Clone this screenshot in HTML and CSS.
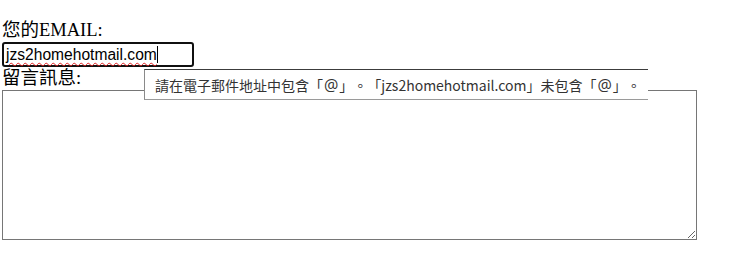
FILE: index.html
```html
<!DOCTYPE html>
<html lang="zh-Hant">
<head>
<meta charset="utf-8">
<link rel="stylesheet" href="styles.css">
</head>
<body>
<form class="form">
  <label class="label">您的EMAIL:</label>
  <div class="email" role="textbox"><span class="typed">jzs2homehotmail.com</span><span class="caret"></span></div>
  <label class="label">留言訊息:</label>
  <textarea class="message"></textarea>
  <div class="tip">請在電子郵件地址中包含「<span class="at">@</span>」。「jzs2homehotmail.com」未包含「<span class="at">@</span>」。</div>
</form>
</body>
</html>
```
FILE: styles.css
```css
html, body { margin: 0; padding: 0; background: #fff; }
.form {
  position: relative;
  padding: 19px 0 0 2px;
  font-family: "Liberation Serif", "Noto Sans CJK TC", serif;
  font-size: 18.5px;
  color: #000;
}
.label { display: block; line-height: 23px; height: 23px; }
.email {
  box-sizing: border-box;
  width: 192px;
  height: 25px;
  border: 2px solid #101010;
  border-radius: 3px;
  display: flex;
  align-items: center;
  padding-left: 2px;
  font-family: "Liberation Sans", Arial, sans-serif;
  font-size: 15.6px;
  color: #000;
}
.typed {
  text-decoration: underline wavy #e02020;
  text-decoration-thickness: 1px;
  text-underline-offset: 2px;
}
.caret { display: inline-block; width: 1px; height: 17px; background: #000; }
.message {
  display: block;
  box-sizing: border-box;
  width: 695px;
  height: 150px;
  margin: 0;
  border: 1px solid #767676;
  resize: both;
}
.tip {
  position: absolute;
  left: 144px;
  top: 69px;
  width: 504px;
  height: 31px;
  box-sizing: border-box;
  background: #fff;
  border-top: 1px solid #3c3c3c;
  border-left: 1px solid #8a8a8a;
  border-bottom: 1px solid #9a9a9a;
  padding-left: 10px;
  display: flex;
  align-items: center;
  font-family: "Noto Sans CJK TC", "Noto Sans", sans-serif;
  font-size: 14px;
  color: #333;
  white-space: nowrap;
  text-spacing-trim: space-all;
}
.at {
  font-family: "Open Sans", sans-serif;
  font-size: 16px;
  padding: 0 1px;
}
```
